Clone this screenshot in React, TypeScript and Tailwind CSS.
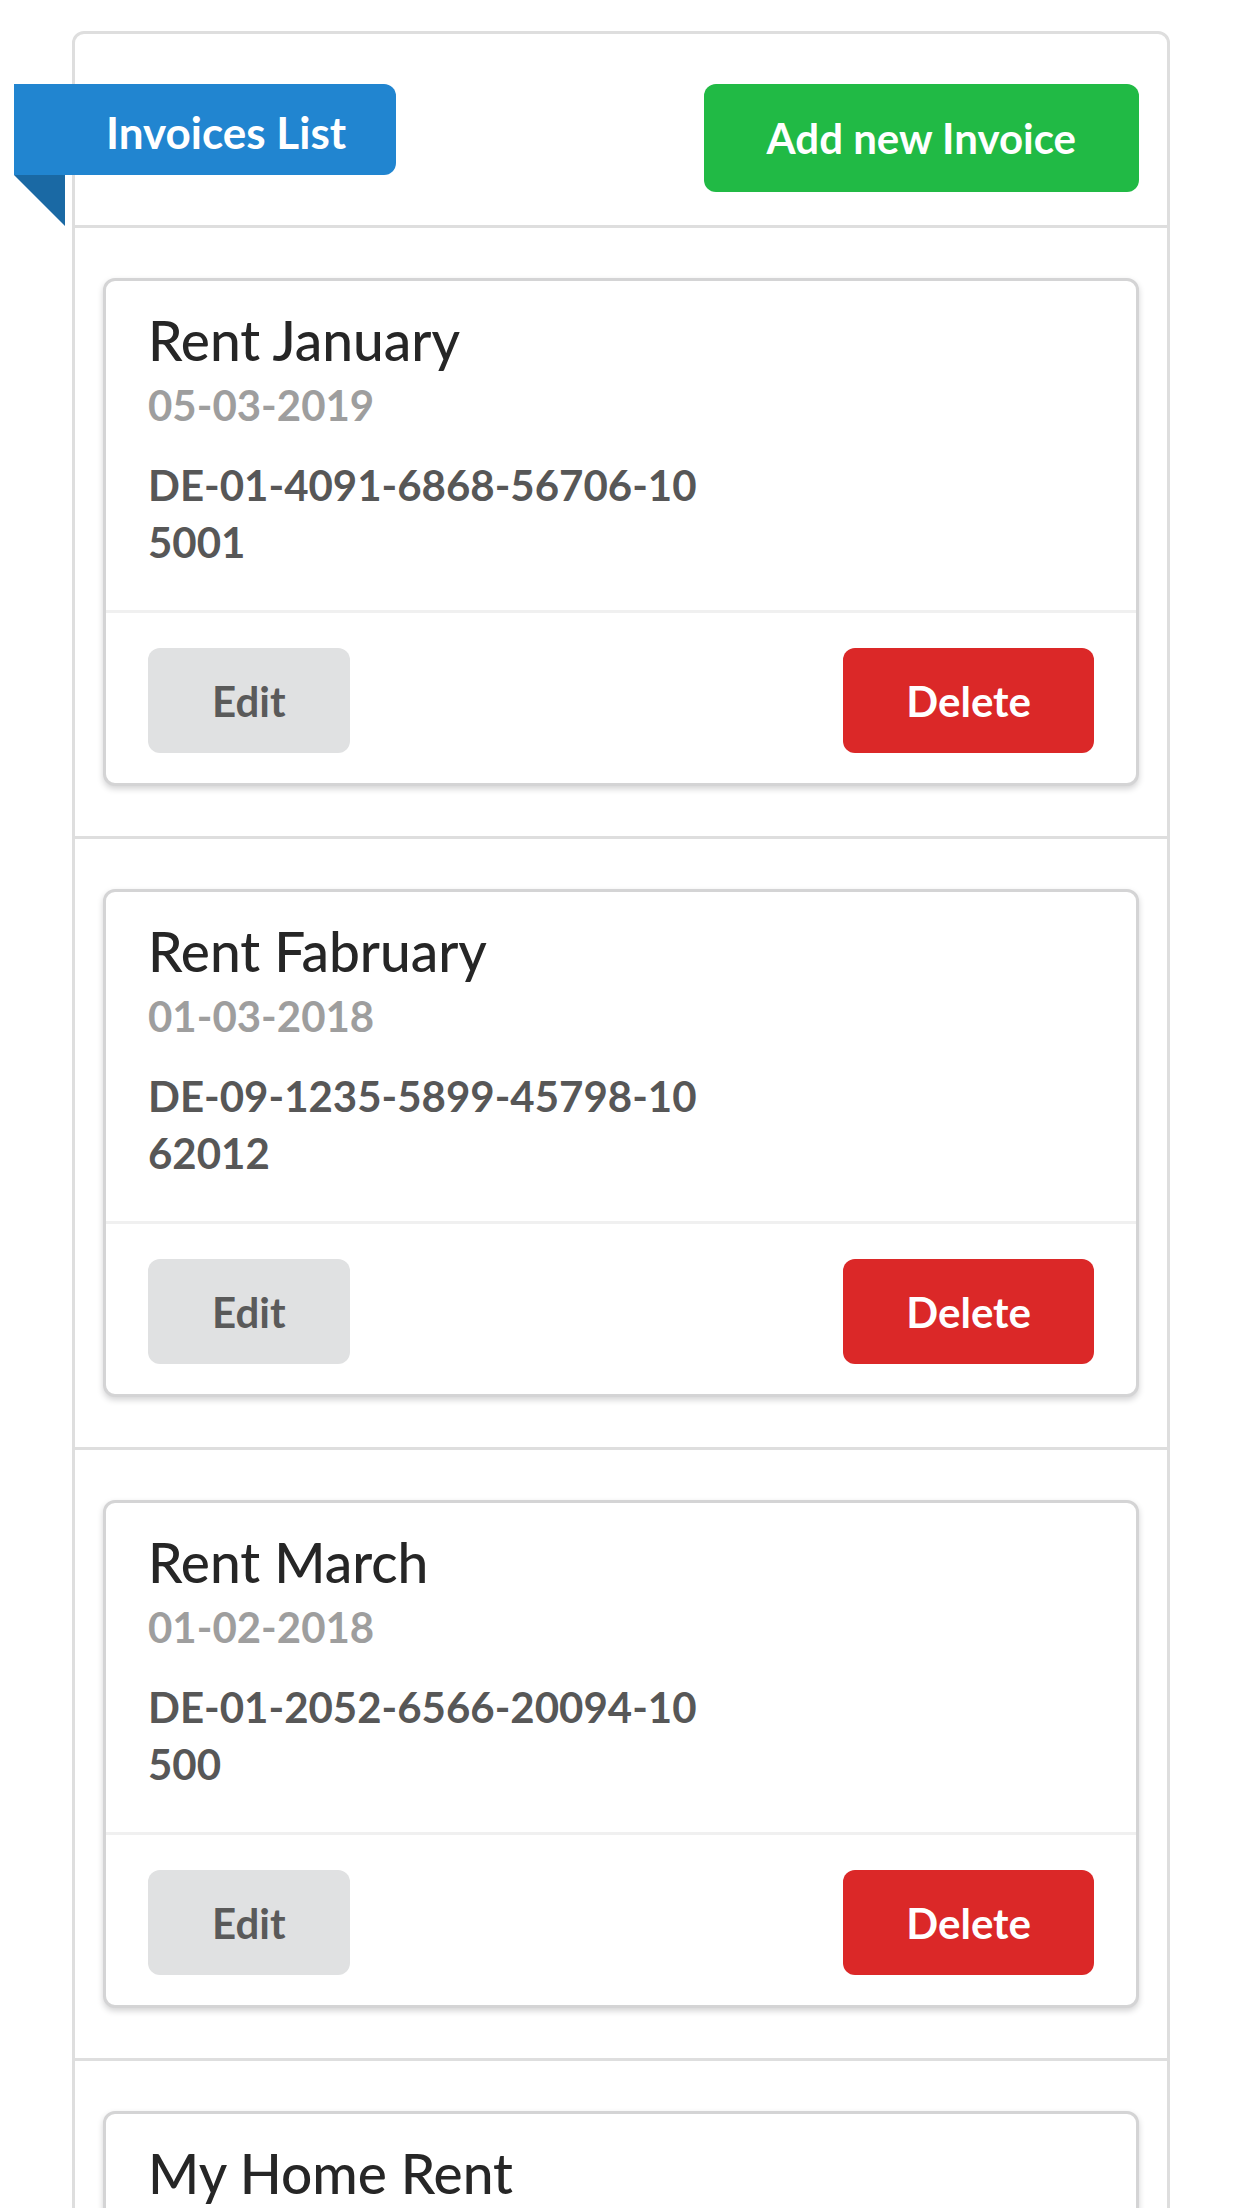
const invoices = [
  { title: "Rent January", date: "05-03-2019", iban: "DE-01-4091-6868-56706-105001" },
  { title: "Rent Fabruary", date: "01-03-2018", iban: "DE-09-1235-5899-45798-1062012" },
  { title: "Rent March", date: "01-02-2018", iban: "DE-01-2052-6566-20094-10500" },
  { title: "My Home Rent", date: "01-01-2018", iban: "DE-04-3318-2290-11470-10300" },
];

type Invoice = (typeof invoices)[number];

const InvoiceCard = ({ invoice }: { invoice: Invoice }) => (
  <div className="rounded-[12px] border-[3px] border-[#d4d4d5] bg-white shadow-[0_3px_6px_0_#d4d4d5]">
    <div className="px-[42px] pt-[34px] pb-[39px]">
      <div className="text-[55px] leading-[51px] font-medium text-[#262626]">{invoice.title}</div>
      <div className="mt-[11px] text-[42px] leading-[56px] font-bold text-[#9e9e9e]">{invoice.date}</div>
      <div className="mt-[24px] w-[558px] break-all text-[42px] leading-[57px] font-bold text-[#575757]">
        {invoice.iban}
      </div>
    </div>
    <div className="flex justify-between border-t-[3px] border-[#f0f0f0] px-[42px] pt-[35px] pb-[30px]">
      <button className="flex h-[105px] items-center rounded-[12px] bg-[#e0e1e2] px-[64px] text-[42px] leading-none font-bold text-[#5a5a5a]">
        Edit
      </button>
      <button className="flex h-[105px] items-center rounded-[12px] bg-[#db2828] px-[63px] text-[42px] leading-none font-bold text-white">
        Delete
      </button>
    </div>
  </div>
);

const App = () => {
  return (
    <div className="h-[2208px] overflow-hidden bg-white font-[Lato,sans-serif]">
      <div className="relative mx-[72px] mt-[31px] rounded-[12px] border-[3px] border-[#dedede]">
        <div className="flex justify-end px-[28px] pt-[50px] pb-[33px]">
          <div className="absolute top-[50px] left-[-61px] flex h-[91px] w-[382px] items-center rounded-r-[12px] bg-[#2185d0] pt-[4px] pl-[92px] text-[44px] leading-none font-bold text-white">
            Invoices List
            <div className="absolute top-full left-0 h-0 w-0 border-t-[51px] border-l-[51px] border-t-[#1a69a4] border-l-transparent" />
          </div>
          <button className="flex h-[108px] items-center rounded-[12px] bg-[#21ba45] px-[63px] text-[42px] leading-none font-bold text-white">
            Add new Invoice
          </button>
        </div>
        {invoices.map(invoice => (
          <div key={invoice.title} className="border-t-[3px] border-[#dedede] px-[28px] py-[50px]">
            <InvoiceCard invoice={invoice} />
          </div>
        ))}
      </div>
    </div>
  );
};

export default App;
